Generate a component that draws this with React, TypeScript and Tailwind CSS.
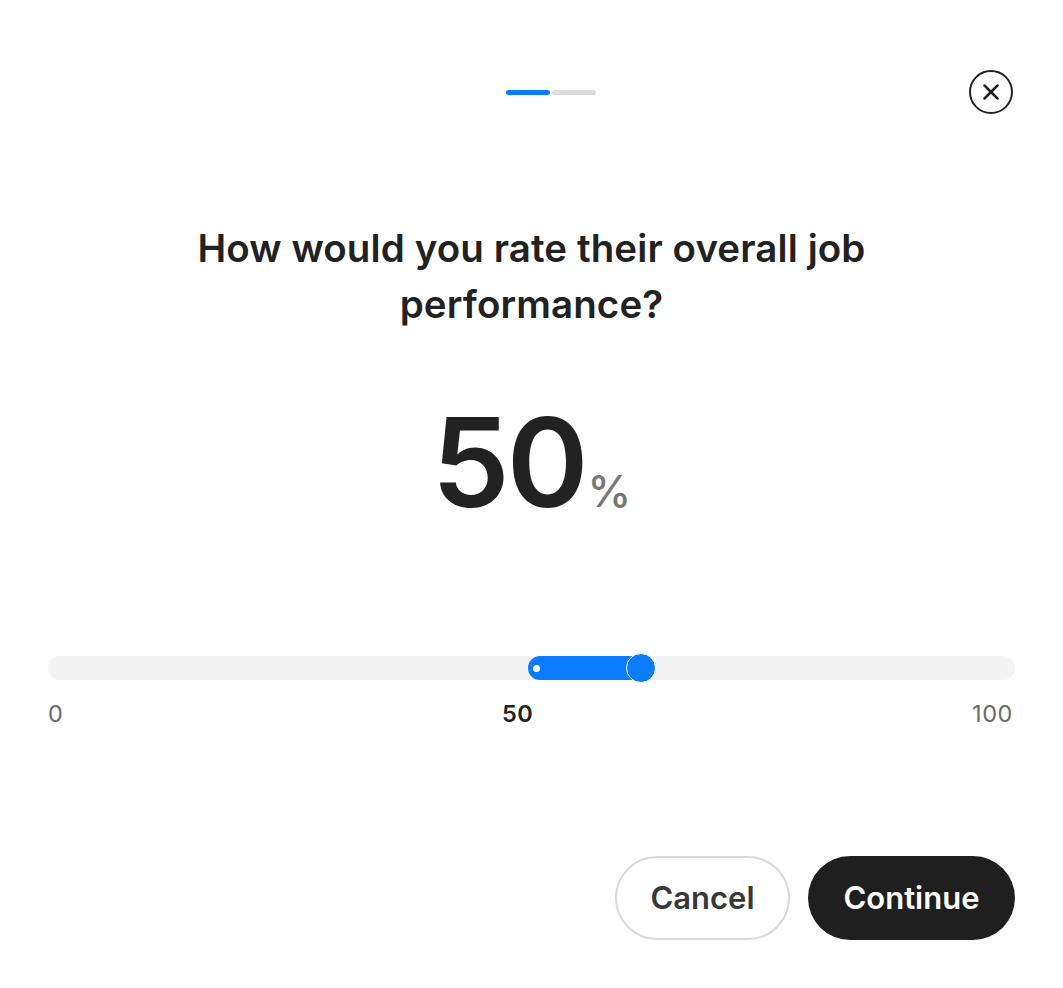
import { X } from "lucide-react";

export default function App() {
  const value = 50;
  return (
    <div
      className="min-h-screen bg-white px-12 text-[#222222]"
      style={{ fontFamily: "Inter, 'Noto Sans', sans-serif" }}
    >
      {/* header */}
      <div className="flex items-center pt-[70px]">
        <div className="flex-1" />
        <div className="ml-[38px] flex gap-[2px]">
          <span className="h-[5px] w-[44px] rounded-full bg-[#0a7cff]" />
          <span className="h-[5px] w-[44px] rounded-full bg-[#dcdcdc]" />
        </div>
        <div className="flex flex-1 justify-end">
          <button className="mr-[2px] flex h-[44px] w-[44px] items-center justify-center rounded-full border-[2.5px] border-[#222222]">
            <X className="h-[26px] w-[26px]" strokeWidth={2.3} />
          </button>
        </div>
      </div>

      {/* question */}
      <h1 className="mx-auto mt-[106px] max-w-[760px] text-center text-[38.5px] leading-[56px] font-semibold tracking-[0.1px]">
        How would you rate their overall job performance?
      </h1>

      {/* value */}
      <div className="mt-[68px] flex items-baseline justify-center">
        <span className="text-[124px] leading-none font-semibold tracking-[-3px]">{value}</span>
        <span className="ml-[2px] text-[44px] leading-none font-medium text-[#777777]">%</span>
      </div>

      {/* slider */}
      <div className="relative mt-[132px] h-[24px] rounded-full bg-[#f4f4f4]">
        <div className="absolute top-0 left-[480px] h-[24px] w-[118px] rounded-l-full bg-[#0a7cff]">
          <span className="absolute top-[8.5px] left-[5px] h-[7px] w-[7px] rounded-full bg-white" />
        </div>
        <span className="absolute top-[-3px] left-[578px] h-[30px] w-[30px] rounded-full border-[1.5px] border-white bg-[#0a7cff]" />
      </div>
      <div className="mt-[22px] flex justify-between pr-[2px] text-[23.5px] leading-[24px] tracking-[0.6px] text-[#6b6b6b]">
        <span>0</span>
        <span className="font-semibold text-[#222222]">50</span>
        <span>100</span>
      </div>

      {/* actions */}
      <div className="mt-[130px] flex justify-end gap-[18px]">
        <button className="h-[84px] w-[175px] rounded-full border-2 border-[#d5d9e0] bg-white text-[31px] font-semibold text-[#383838]">
          Cancel
        </button>
        <button className="h-[84px] w-[207px] rounded-full bg-[#1f1f1f] text-[31px] font-semibold text-white">
          Continue
        </button>
      </div>
    </div>
  );
}
